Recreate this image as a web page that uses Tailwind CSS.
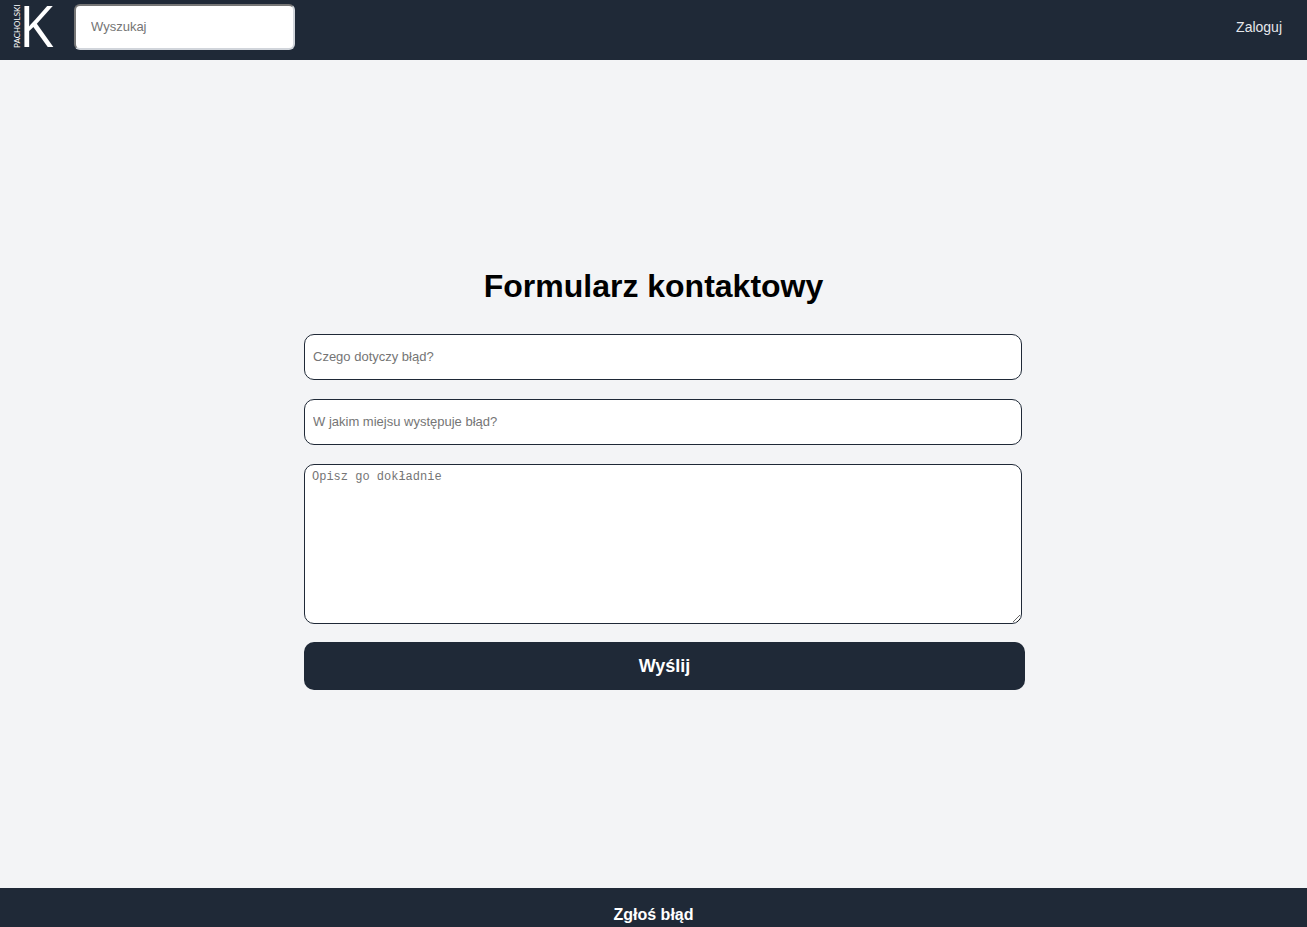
<!DOCTYPE html>
<html lang="pl">
<head>
<meta charset="utf-8">
<meta name="viewport" content="width=device-width, initial-scale=1">
<title>Formularz kontaktowy</title>
<script src="https://cdn.jsdelivr.net/npm/@tailwindcss/browser@4"></script>
</head>
<body class="flex min-h-screen flex-col bg-[#f3f4f6] font-['Liberation_Sans',Arial,sans-serif] text-black">
  <header class="flex h-[60px] items-start justify-between bg-[#1f2937] pr-[25px] pl-3">
    <div class="flex items-center gap-5 pt-1">
      <a href="#" aria-label="Pacholski">
        <svg class="block h-[46px] w-[42px] overflow-visible" viewBox="0 0 42 46" fill="#fff" aria-hidden="true">
          <text x="7" y="43" font-size="56" font-family="'Open Sans', sans-serif">K</text>
          <text transform="translate(8 44) rotate(-90)" font-size="8" font-family="Lato, sans-serif">PACHOLSKI</text>
        </svg>
      </a>
      <input type="search" aria-label="Wyszukaj" placeholder="Wyszukaj" class="h-[46px] w-[221px] rounded-md border-2 border-t-[#767676] border-r-[#d1d5db] border-b-[#d1d5db] border-l-[#767676] bg-white px-[15px] pb-[2px] text-[13px] placeholder:text-[#757575]">
    </div>
    <a href="#" class="pt-[17px] text-sm text-[#e5e7eb]">Zaloguj</a>
  </header>

  <main class="flex flex-1 flex-col items-center justify-center pt-[7px]">
    <h1 class="text-[32px] leading-10 font-bold">Formularz kontaktowy</h1>
    <form class="mt-7 ml-[22px] flex w-full max-w-[721px] flex-col">
      <input type="text" aria-label="Czego dotyczy błąd?" placeholder="Czego dotyczy błąd?" class="mr-[3px] mb-[19px] h-[46px] rounded-[10px] border border-[#1f2937] bg-white px-2 text-[13px] placeholder:text-[#757575]">
      <input type="text" aria-label="W jakim miejsu występuje błąd?" placeholder="W jakim miejsu występuje błąd?" class="mr-[3px] mb-[19px] h-[46px] rounded-[10px] border border-[#1f2937] bg-white px-2 text-[13px] placeholder:text-[#757575]">
      <textarea aria-label="Opisz go dokładnie" placeholder="Opisz go dokładnie" class="mr-[3px] mb-[18px] h-40 resize rounded-[10px] border border-[#1f2937] bg-white px-[7px] py-1 font-['Liberation_Mono',monospace] text-xs placeholder:text-[#757575]"></textarea>
      <button type="submit" class="h-12 rounded-[10px] bg-[#1f2937] text-lg font-bold text-white">Wyślij</button>
    </form>
  </main>

  <footer class="flex justify-center bg-[#1f2937] pt-[15px]">
    <a href="#" class="text-base font-bold text-white">Zgłoś błąd</a>
  </footer>
</body>
</html>
